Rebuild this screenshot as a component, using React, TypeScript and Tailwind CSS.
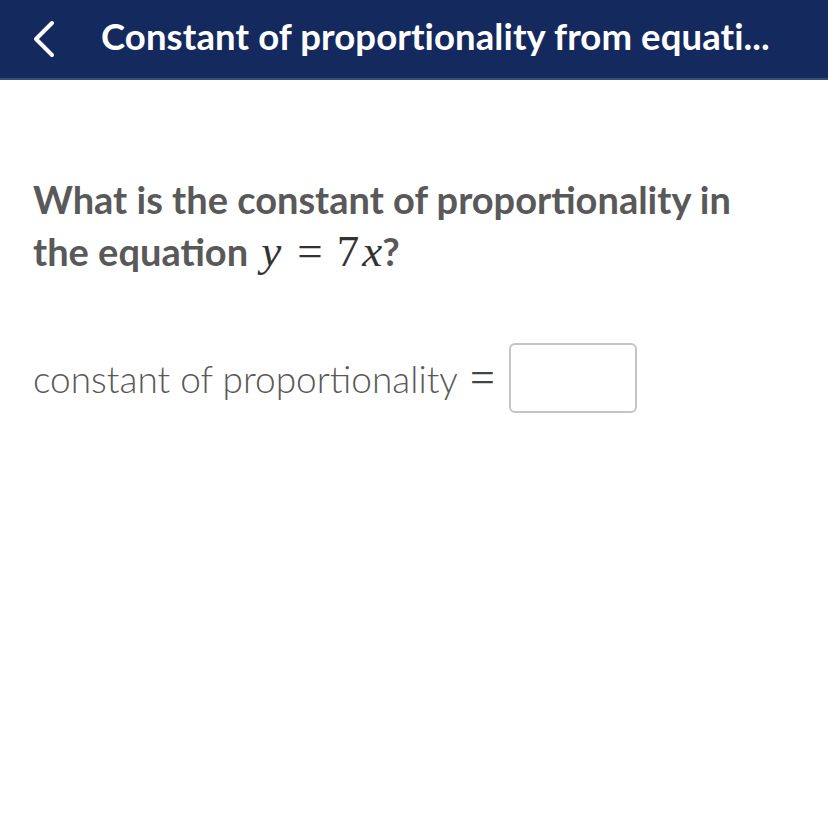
import React from "react";

export default function App() {
  return (
    <div className="w-[828px] h-[828px] bg-white" style={{ fontFamily: "Lato, 'Noto Sans', sans-serif" }}>
      <div className="h-[80px] bg-[#142a5e] border-b-2 border-[#3a4c78] flex items-center">
        <div className="w-[101px] flex items-center pl-[32px]">
          <svg width="24" height="38" viewBox="0 0 24 38" fill="none">
            <path d="M20 3 L4 19 L20 35" stroke="white" strokeWidth="4" strokeLinecap="round" strokeLinejoin="round" />
          </svg>
        </div>
        <div className="text-white font-bold text-[36.5px] leading-none pb-[6px] tracking-[0.1px]">
          Constant of proportionality from equati...
        </div>
      </div>
      <div className="px-[33px] pt-[93px]">
        <div className="text-[#595959] font-bold text-[38px] leading-[52px]">
          What is the constant of proportionality in
          <br />
          the equation{" "}
          <span className="font-normal text-[#333] ml-[4px]" style={{ fontFamily: "'Liberation Serif', 'DejaVu Serif', serif" }}>
            <i className="text-[45px]">y</i>
            <span className="text-[45px] ml-[16px] mr-[14px]">=</span>
            <span className="text-[45px]">7</span>
            <i className="text-[45px] ml-[3px]">x</i>
          </span>
          ?
        </div>
        <div className="mt-[64px] flex items-center text-[#595959]">
          <span className="font-light text-[37px] leading-none">constant of proportionality</span>
          <span className="text-[44px] leading-none ml-[12px] mr-[14px] text-[#444]" style={{ fontFamily: "'Liberation Serif', serif" }}>=</span>
          <div className="w-[128px] h-[70px] border-2 border-[#c4c4c4] rounded-[6px]" />
        </div>
      </div>
    </div>
  );
}
